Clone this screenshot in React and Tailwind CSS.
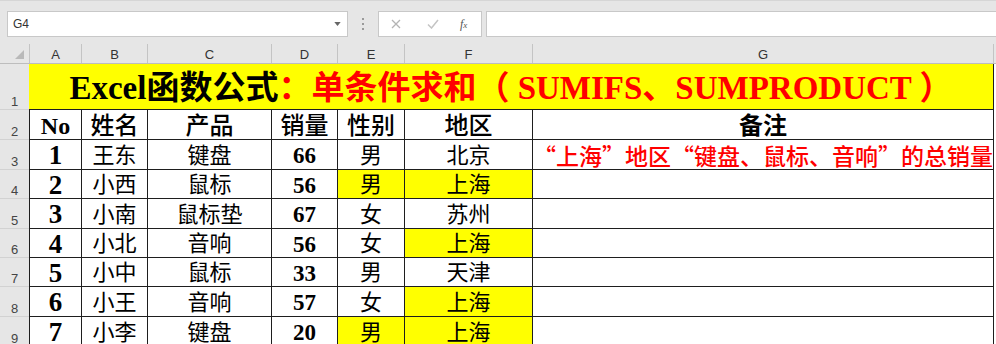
import React from "react"

const serif = "font-['Liberation_Serif','Noto_Sans_CJK_SC',serif]"
const cjk = "font-['Noto_Sans_CJK_SC','Liberation_Serif',sans-serif]"
const ui = "font-['Liberation_Sans','Noto_Sans',sans-serif]"

const colW = ["w-[53px]", "w-[66px]", "w-[124px]", "w-[66px]", "w-[67px]", "w-[128px]", "w-[461px]"]
const letters = ["A", "B", "C", "D", "E", "F", "G"]

const rows = [
    { n: 3, h: "h-[30px]", no: "1", name: "王东", prod: "键盘", qty: "66", sex: "男", area: "北京" },
    { n: 4, h: "h-[29px]", no: "2", name: "小西", prod: "鼠标", qty: "56", sex: "男", area: "上海", ey: true, fy: true },
    { n: 5, h: "h-[30px]", no: "3", name: "小南", prod: "鼠标垫", qty: "67", sex: "女", area: "苏州" },
    { n: 6, h: "h-[29px]", no: "4", name: "小北", prod: "音响", qty: "56", sex: "女", area: "上海", fy: true },
    { n: 7, h: "h-[29px]", no: "5", name: "小中", prod: "鼠标", qty: "33", sex: "男", area: "天津" },
    { n: 8, h: "h-[30px]", no: "6", name: "小王", prod: "音响", qty: "57", sex: "女", area: "上海", fy: true },
    { n: 9, h: "h-[30px]", no: "7", name: "小李", prod: "键盘", qty: "20", sex: "男", area: "上海", ey: true, fy: true },
]

const RowHead = ({ n, h }) => (
    <div className={`${h} w-[29px] shrink-0 bg-[#e6e6e6] border-b border-[#d2d2d2] flex items-end justify-center pb-[1px] text-[13px] leading-none text-[#444] ${ui}`}>
        {n}
    </div>
)

const Cell = ({ w, yellow, className = "", children }) => (
    <div className={`${w} shrink-0 h-full border-r border-b border-[#1e1e1e] flex items-center justify-center pt-[2px]
    ${yellow ? "bg-[#ffff00]" : "bg-white"} ${className}`}>
        {children}
    </div>
)

const Toolbar = () => (
    <div className="h-[44px] bg-[#e6e6e6] border-t border-[#d6d6d6] flex items-start pt-[10px]">
        <div className={`ml-[7px] w-[341px] h-[26px] bg-white border border-[#c8c8c8] flex items-center justify-between pl-[5px] pr-[6px] text-[12px] text-[#333] ${ui}`}>
            <span>G4</span>
            <svg width="7" height="4" viewBox="0 0 8 5"><path d="M0 0h8L4 5z" fill="#666" /></svg>
        </div>
        <div className="w-[30px] h-[26px] flex flex-col items-center justify-center gap-[3px]">
            <span className="w-[2px] h-[2px] bg-[#9a9a9a]" />
            <span className="w-[2px] h-[2px] bg-[#9a9a9a]" />
            <span className="w-[2px] h-[2px] bg-[#9a9a9a]" />
        </div>
        <div className="w-[104px] h-[26px] bg-white border border-[#c8c8c8] flex items-center">
            <svg className="ml-[12px]" width="10" height="10" viewBox="0 0 10 10">
                <path d="M1 1l8 8M9 1l-8 8" stroke="#b4b4b4" strokeWidth="1.3" />
            </svg>
            <svg className="ml-[26px]" width="12" height="10" viewBox="0 0 12 10">
                <path d="M1 5.5l3.5 3.5L11 1" stroke="#c4c4c4" strokeWidth="1.5" fill="none" />
            </svg>
            <span className={`ml-[21px] text-[12px] italic text-[#555] ${serif}`}>f<span className="text-[9px]">x</span></span>
        </div>
        <div className="ml-[4px] flex-1 h-[26px] bg-white border border-[#c8c8c8] border-r-0" />
    </div>
)

const ColHeader = () => (
    <div className={`h-[20px] flex bg-[#e6e6e6] border-b border-[#bdbdbd] text-[13px] text-[#333] ${ui}`}>
        <div className="w-[29px] shrink-0 relative">
            <svg className="absolute right-[5px] bottom-[4px]" width="9" height="9" viewBox="0 0 9 9">
                <path d="M9 0v9H0z" fill="#b9b9b9" />
            </svg>
        </div>
        {letters.map((l, i) => (
            <div key={l} className={`${colW[i]} shrink-0 border-r border-[#c4c4c4] flex items-center justify-center pt-[2px] ${i === 0 ? "border-l" : ""}`}>
                {l}
            </div>
        ))}
    </div>
)

const App = () => {
    return (
        <div className="w-[996px] h-[344px] overflow-hidden bg-white">
            <Toolbar />
            <ColHeader />

            {/* row 1: merged title */}
            <div className="flex h-[46px]">
                <RowHead n={1} h="h-[46px]" />
                <div className={`w-[965px] shrink-0 h-full bg-[#ffff00] border-b border-r border-[#1e1e1e] flex items-center justify-center pt-[3px] text-[33px] font-bold leading-none ${serif}`}>
                    <span className="text-black">Excel函数公式</span>
                    <span className="text-[#ff0000]">：单条件求和（ SUMIFS、SUMPRODUCT ）</span>
                </div>
            </div>

            {/* row 2: headers */}
            <div className={`flex h-[30px] text-[24px] leading-none text-black ${serif}`}>
                <RowHead n={2} h="h-[30px]" />
                <Cell w={colW[0]} className="border-l font-bold">No</Cell>
                <Cell w={colW[1]} className="font-medium">姓名</Cell>
                <Cell w={colW[2]} className="font-medium">产品</Cell>
                <Cell w={colW[3]} className="font-medium">销量</Cell>
                <Cell w={colW[4]} className="font-medium">性别</Cell>
                <Cell w={colW[5]} className="font-medium">地区</Cell>
                <Cell w={colW[6]} className="font-bold">备注</Cell>
            </div>

            {rows.map(r => (
                <div key={r.n} className={`flex ${r.h} text-[22px] leading-none text-black ${serif}`}>
                    <RowHead n={r.n} h={r.h} />
                    <Cell w={colW[0]} className="border-l font-bold text-[27px]">{r.no}</Cell>
                    <Cell w={colW[1]}>{r.name}</Cell>
                    <Cell w={colW[2]}>{r.prod}</Cell>
                    <Cell w={colW[3]} className="font-bold text-[23px]">{r.qty}</Cell>
                    <Cell w={colW[4]} yellow={r.ey}>{r.sex}</Cell>
                    <Cell w={colW[5]} yellow={r.fy}>{r.area}</Cell>
                    <Cell w={colW[6]} className={`text-[#ff0000] font-medium text-[23px] ${cjk}`}>
                        {r.n === 3 ? "“上海”地区“键盘、鼠标、音响”的总销量" : ""}
                    </Cell>
                </div>
            ))}
        </div>
    )
}

export default App
